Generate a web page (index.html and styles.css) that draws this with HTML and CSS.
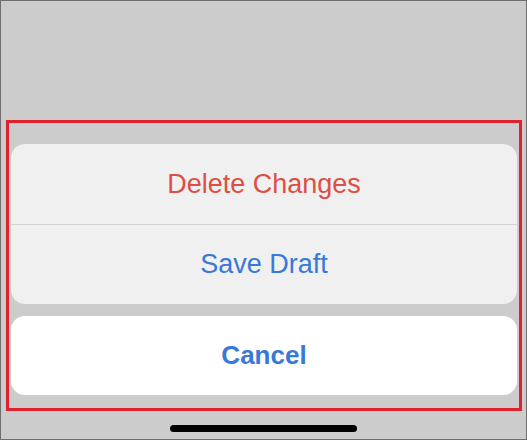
FILE: index.html
```
<html lang="en">
<head>
    <title>Action Sheet</title>
    <meta http-equiv="Content-Type" content="text/html; charset=utf-8">
    <link rel="stylesheet" href="styles.css">
</head>
<body>
    <div class="screen">
        <div class="highlight">
            <div class="sheet">
                <div class="group">
                    <div class="action destructive">Delete Changes</div>
                    <div class="action normal">Save Draft</div>
                </div>
                <div class="cancel">Cancel</div>
            </div>
        </div>
        <div class="home-bar"></div>
    </div>
</body>
</html>
```

FILE: styles.css
```
*{
    box-sizing: border-box;
}
body{
    margin: 0;
    font-family: "Liberation Sans", Arial, sans-serif;
}
.screen{
    width: 527px;
    height: 440px;
    background-color: #cccccc;
    border: 1px solid #6f6f6f;
    padding-top: 119px;
    display: flex;
    flex-direction: column;
}
.highlight{
    height: 291px;
    margin: 0 4px 0 5px;
    border: 3px solid #e0222e;
    padding: 21px 2px 0 2px;
}
.sheet{
    display: flex;
    flex-direction: column;
    gap: 12px;
}
.group{
    background-color: #f0f0f0;
    border-radius: 14px;
    overflow: hidden;
}
.action{
    height: 80px;
    display: flex;
    align-items: center;
    justify-content: center;
    font-size: 27px;
}
.action + .action{
    border-top: 1px solid #d2d2d2;
}
.destructive{
    color: #dd4f45;
}
.normal{
    color: #3878d8;
}
.cancel{
    height: 79px;
    background-color: #ffffff;
    border-radius: 14px;
    display: flex;
    align-items: center;
    justify-content: center;
    font-size: 26px;
    font-weight: bold;
    color: #3878d8;
}
.home-bar{
    width: 187px;
    height: 7px;
    margin: 14px auto 0;
    background-color: #000;
    border-radius: 4px;
}
```
